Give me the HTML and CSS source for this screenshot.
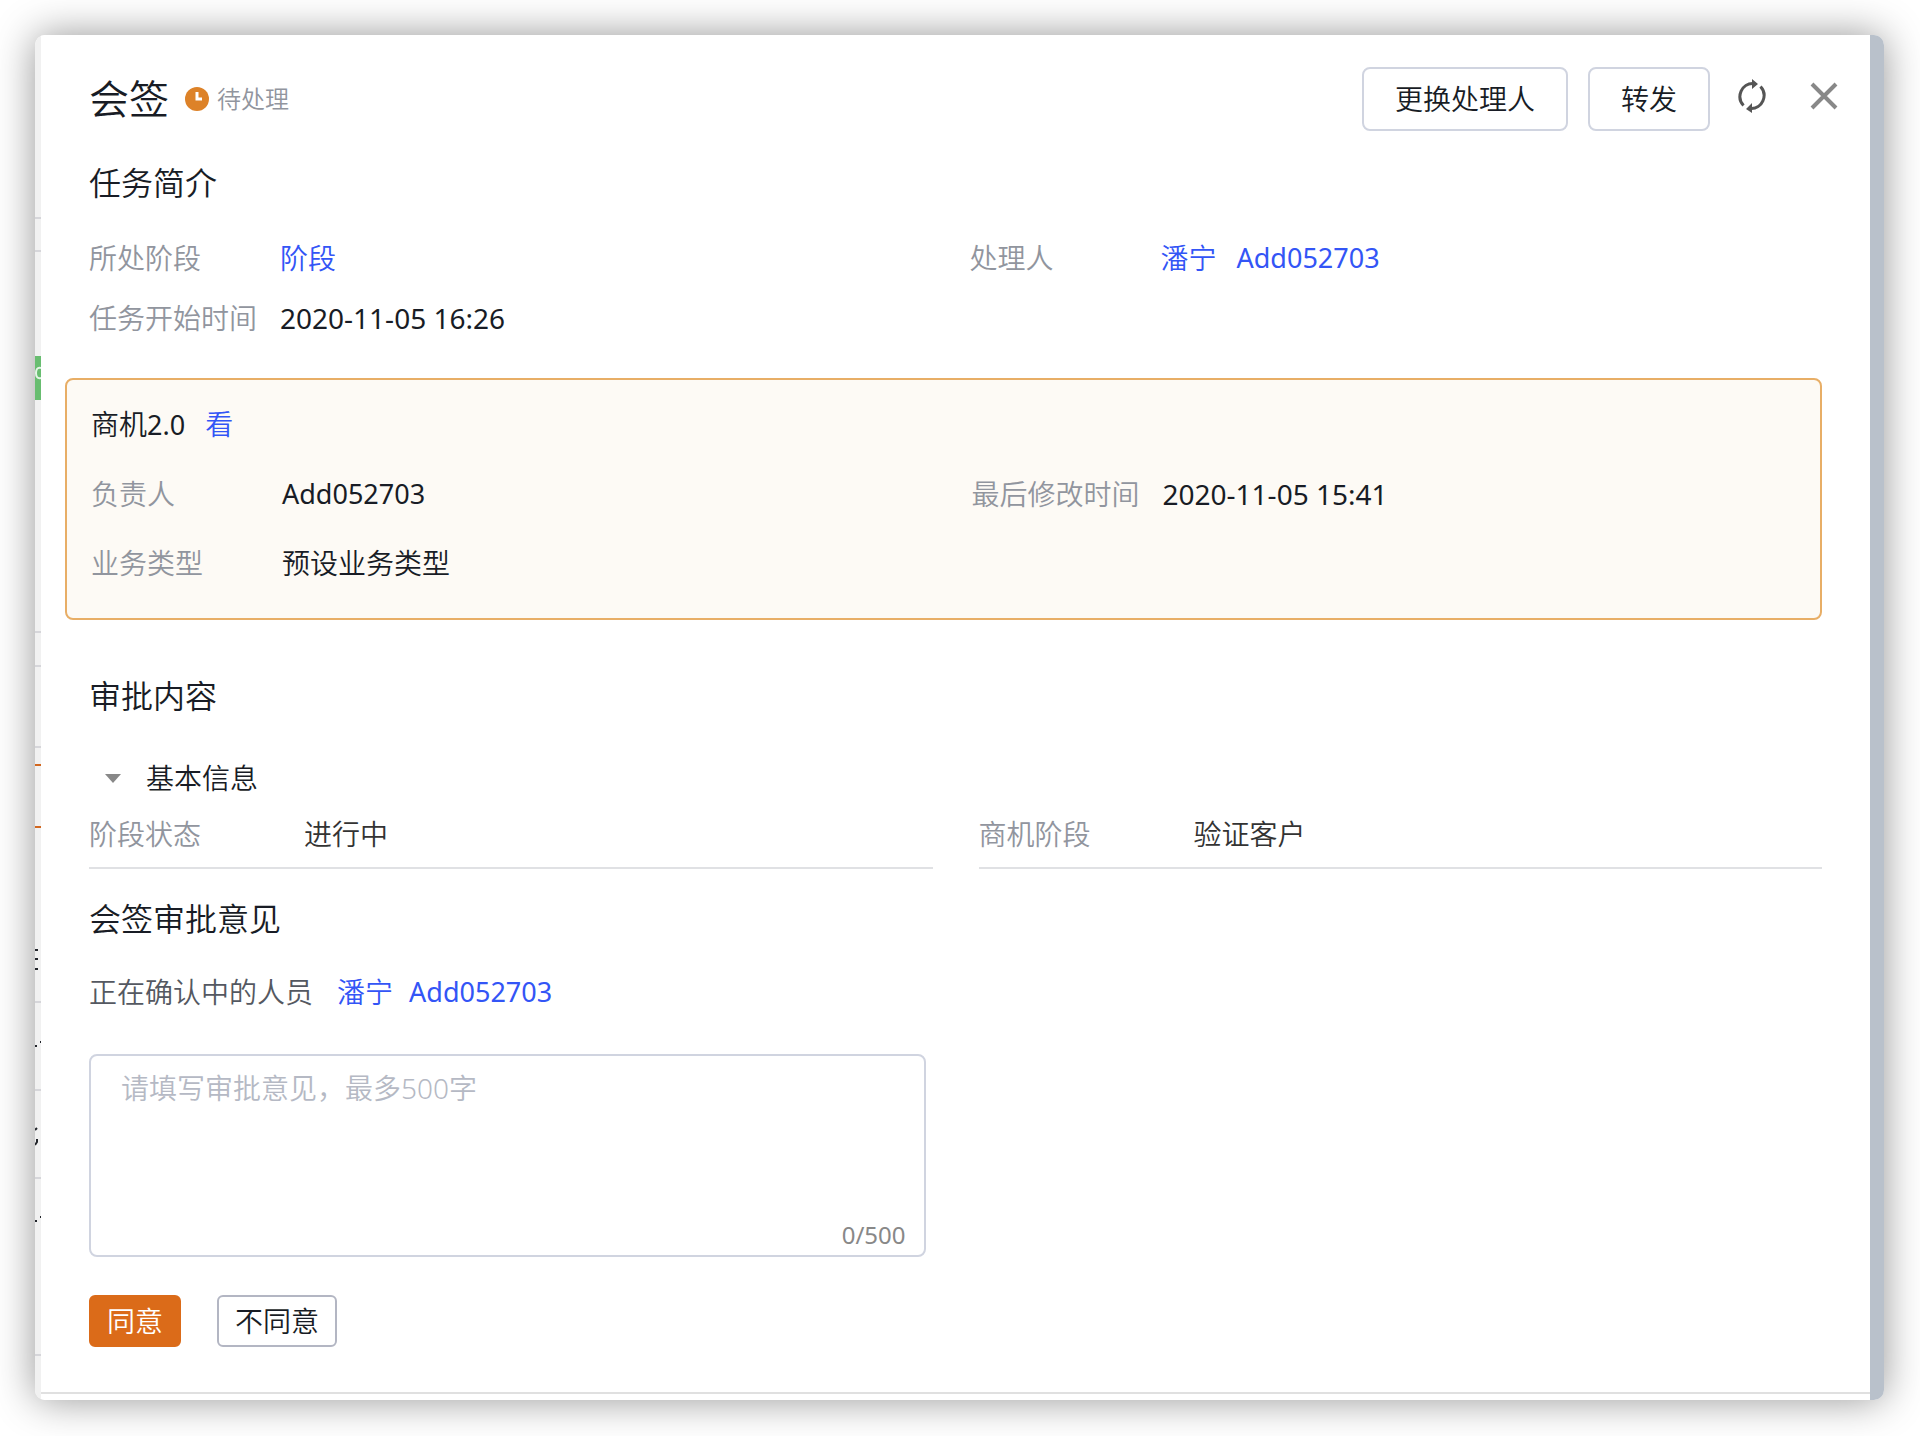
FILE: index.html
```html
<!DOCTYPE html>
<html lang="zh-CN">
<head>
<meta charset="utf-8">
<title>会签</title>
<link rel="stylesheet" href="styles.css">
</head>
<body>
<div class="window">
  <div class="underlay" aria-hidden="true">
    <svg class="underlay-art" width="6" height="100%">
      <g fill="#d6d6da">
        <rect y="182" width="6" height="2"/><rect y="215" width="6" height="2"/>
        <rect y="596" width="6" height="2"/><rect y="630" width="6" height="2"/>
        <rect y="711" width="6" height="2"/><rect y="966" width="6" height="2"/>
        <rect y="1054" width="6" height="2"/><rect y="1142" width="6" height="2"/>
        <rect y="1319" width="6" height="2"/>
      </g>
      <rect y="321" width="6" height="44" fill="#68bd70"/>
      <path d="M6 333C2 332 1 335 1 338s1 6 5 5" fill="none" stroke="#e4f4e6" stroke-width="2"/>
      <g fill="#d2671f"><rect y="729" width="6" height="2"/><rect y="791" width="6" height="2"/></g>
      <g fill="#22252b">
        <rect y="914" width="3" height="2"/><rect y="923" width="3" height="2"/><rect y="933" width="3" height="2"/>
        <rect y="1010" width="2" height="2"/><rect x="5" y="1006" width="1" height="2"/>
        <rect y="1185" width="2" height="2"/><rect x="5" y="1181" width="1" height="2"/>
      </g>
      <path d="M0 1095l2-2M2 1104v3l-2 3" fill="none" stroke="#22252b" stroke-width="2"/>
    </svg>
  </div>
  <main class="drawer">
    <header class="header">
      <h1 class="title">会签</h1>
      <span class="status">
        <svg width="24" height="24" viewBox="0 0 24 24" aria-hidden="true">
          <circle cx="12" cy="12" r="12" fill="#dd8228"/>
          <path d="M12 5v7h5" fill="none" stroke="#fff" stroke-width="3"/>
        </svg>
        待处理
      </span>
      <div class="actions">
        <button class="btn" type="button">更换处理人</button>
        <button class="btn" type="button">转发</button>
      </div>
      <div class="tools">
        <button class="icon-btn" type="button" aria-label="刷新">
          <svg width="32" height="34" viewBox="0 0 32 34" aria-hidden="true">
            <g fill="none" stroke="#555" stroke-width="3">
              <path d="M7.500 26.500A12.500 13 0 0 1 17 4.500"/>
              <path d="M24.500 7.500A12.500 13 0 0 1 15 29.500"/>
            </g>
            <path d="M16 0l6 5-6 5zM16 24v10l-6-4z" fill="#555"/>
          </svg>
        </button>
        <button class="icon-btn" type="button" aria-label="关闭">
          <svg width="32" height="34" viewBox="0 0 32 34" aria-hidden="true">
            <path d="M4 5l24 24M28 5L4 29" fill="none" stroke="#888" stroke-width="4"/>
          </svg>
        </button>
      </div>
    </header>

    <section class="intro">
      <h2 class="heading">任务简介</h2>
      <dl class="fields">
        <div class="field"><dt>所处阶段</dt><dd><a href="#stage">阶段</a></dd></div>
        <div class="field"><dt>处理人</dt><dd class="people"><a href="#panning">潘宁</a><a class="latin" href="#add052703">Add052703</a></dd></div>
        <div class="field"><dt>任务开始时间</dt><dd class="date">2020-11-05 16:26</dd></div>
      </dl>
    </section>

    <section class="card">
      <p class="card-title"><span>商机<span class="latin">2.0</span></span> <a href="#view">看</a></p>
      <dl class="fields card-fields">
        <div class="field"><dt>负责人</dt><dd class="latin">Add052703</dd></div>
        <div class="field"><dt>最后修改时间</dt><dd class="date">2020-11-05 15:41</dd></div>
        <div class="field"><dt>业务类型</dt><dd>预设业务类型</dd></div>
      </dl>
    </section>

    <section>
      <h2 class="heading">审批内容</h2>
      <button class="group-toggle" type="button" aria-expanded="true">
        <svg width="16" height="9" viewBox="0 0 16 9" aria-hidden="true"><path d="M0 0h16L8 9z" fill="#888"/></svg>
        基本信息
      </button>
      <dl class="fields lined-fields">
        <div class="field"><dt>阶段状态</dt><dd>进行中</dd></div>
        <div class="field"><dt>商机阶段</dt><dd>验证客户</dd></div>
      </dl>
    </section>

    <form class="opinion">
      <h2 class="heading">会签审批意见</h2>
      <p class="pending"><label for="comment">正在确认中的人员</label><span class="pending-people"><a href="#panning">潘宁</a><a class="latin" href="#add052703">Add052703</a></span></p>
      <div class="comment">
        <textarea id="comment" class="comment-input" maxlength="500" placeholder="请填写审批意见，最多500字"></textarea>
        <span class="counter">0/500</span>
      </div>
      <div class="decisions">
        <button class="decision decision-primary" type="button">同意</button>
        <button class="decision" type="button">不同意</button>
      </div>
    </form>
    <footer class="footer"></footer>
  </main>
</div>
</body>
</html>
```
FILE: styles.css
```css
* {
  box-sizing: border-box;
}

body {
  display: flex;
  min-height: 100vh;
  margin: 0;
  padding: 35px 36px 36px 35px;
  background: #fff;
  color: #181c25;
  font: 350 28px/40px "Noto Sans", "Noto Sans CJK SC", sans-serif;
}

h1, h2, p, dl, dd {
  margin: 0;
  font-weight: inherit;
}

a {
  color: #3355f6;
  text-decoration: none;
}

button, textarea {
  font: inherit;
  color: inherit;
}

button {
  background: #fff;
  cursor: pointer;
}

.latin {
  font-size: 27px;
  font-weight: 400;
}

.date {
  font-weight: 400;
}

.window {
  display: flex;
  flex: 1;
  min-width: 0;
  overflow: hidden;
  border-right: 14px solid #b9c1cb;
  border-radius: 10px;
  box-shadow: 0 0 40px rgba(0, 0, 0, 0.42);
}

.underlay {
  position: relative;
  flex: 0 0 6px;
  background: #f1f1f1;
}

.underlay-art {
  position: absolute;
  inset: 0;
}

.drawer {
  display: flex;
  flex: 1;
  flex-direction: column;
  min-width: 0;
  padding: 32px 48px 0;
  background: #fff;
}

.header {
  display: flex;
  align-items: center;
  margin: 0 -18px 32px 0;
}

.title {
  font-size: 40px;
  line-height: 48px;
}

.status {
  display: flex;
  align-items: center;
  gap: 8px;
  margin-left: 16px;
  color: #91959e;
  font-size: 24px;
}

.actions {
  display: flex;
  gap: 20px;
  margin-left: auto;
}

.btn {
  height: 64px;
  padding: 0 31px;
  border: 2px solid #d0d4e0;
  border-radius: 8px;
}

.tools {
  display: flex;
  gap: 40px;
  margin-left: 26px;
  padding-bottom: 6px;
}

.icon-btn {
  display: flex;
  padding: 0;
  border: 0;
}

.heading {
  font-size: 32px;
}

.fields {
  display: grid;
  grid-template-columns: 1fr 1fr;
  gap: 20px 28px;
}

.field {
  display: grid;
  grid-template-columns: 191px 1fr;
}

.field dt {
  color: #91959e;
}

.people {
  display: flex;
  gap: 20px;
}

.intro {
  display: grid;
  gap: 35px;
}

.card {
  display: grid;
  gap: 29px;
  margin: 40px 0 56px -24px;
  padding: 24px 0 35px 24px;
  border: 2px solid #e8ae66;
  border-radius: 8px;
  background: #fdfaf5;
}

.card-title {
  display: flex;
  gap: 20px;
}

.card-fields {
  gap: 29px 32px;
}

.group-toggle {
  display: flex;
  align-items: center;
  gap: 25px;
  margin: 42px 0 16px;
  padding: 0 16px;
  border: 0;
}

.lined-fields {
  column-gap: 46px;
}

.lined-fields .field {
  grid-template-columns: 215px 1fr;
  padding-bottom: 13px;
  border-bottom: 2px solid #e0e1e4;
}

.lined-fields dd {
  color: #333;
}

.opinion {
  margin-top: 30px;
}

.pending {
  display: flex;
  gap: 24px;
  margin: 33px 0 42px;
  color: #545861;
}

.pending-people {
  display: flex;
  gap: 16px;
}

.comment {
  position: relative;
  width: calc(50% - 30px);
}

.comment-input {
  display: block;
  width: 100%;
  height: 203px;
  padding: 12px 30px;
  border: 2px solid #d0d4e0;
  border-radius: 8px;
  resize: none;
}

.comment-input::placeholder {
  color: #b5b9c4;
  opacity: 1;
}

.counter {
  position: absolute;
  right: 20px;
  bottom: 2px;
  color: #888;
  font-size: 24px;
  font-weight: 400;
}

.decisions {
  display: flex;
  gap: 36px;
  margin-top: 38px;
}

.decision {
  height: 52px;
  padding: 0 16px;
  border: 2px solid #b3b6c3;
  border-radius: 6px;
}

.decision-primary {
  border-color: #db6b19;
  background: #db6b19;
  color: #fff;
}

.footer {
  height: 8px;
  margin: auto -48px 0;
  border-top: 2px solid #e0e0e0;
}
```
